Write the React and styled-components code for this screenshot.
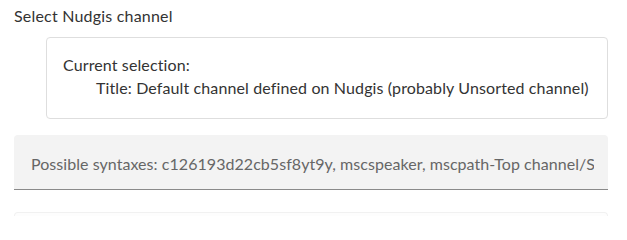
import React from "react";
import styled, { createGlobalStyle } from "styled-components";

const Global = createGlobalStyle`
  html, body { margin: 0; padding: 0; background: #fff; }
  body { font-family: "Lato", "Noto Sans", sans-serif; }
`;

const Page = styled.div`
  width: 627px;
  height: 216px;
  overflow: hidden;
  box-sizing: border-box;
  padding: 0 19px 0 14px;
  display: flex;
  flex-direction: column;
  & > * { flex-shrink: 0; }
`;

const Heading = styled.div`
  font-size: 16px;
  line-height: 20px;
  color: #333;
  padding-top: 6px;
  letter-spacing: 0.2px;
`;

const Card = styled.div`
  margin: 11px 0 0 32px;
  border: 1px solid #dedede;
  border-radius: 4px;
  padding: 15px 16px 19px;
  display: flex;
  flex-direction: column;
`;

const Line = styled.div`
  font-size: 16px;
  line-height: 23px;
  color: #333;
  padding-left: ${(p) => p.$indent || 0}px;
  white-space: nowrap;
  letter-spacing: 0.12px;
`;

const Field = styled.div`
  margin-top: 16px;
  height: 54px;
  background: #f3f3f3;
  border-radius: 4px 4px 0 0;
  border-bottom: 1px solid #8a8a8a;
  display: flex;
  align-items: center;
  padding: 0 14px 0 17px;
`;

const HintClip = styled.div`
  flex: 1;
  min-width: 0;
  overflow: hidden;
  padding-top: 2px;
`;

const Hint = styled.div`
  font-size: 16px;
  color: #666;
  white-space: nowrap;
  letter-spacing: 0.05px;
`;

const NextBox = styled.div`
  margin-top: 22px;
  height: 20px;
  background: #fdfdfd;
  border: 1px solid #f1f1f1;
  border-bottom: none;
  border-radius: 4px 4px 0 0;
`;

export default function App() {
  return (
    <>
      <Global />
      <Page>
        <Heading>Select Nudgis channel</Heading>
        <Card>
          <Line>Current selection:</Line>
          <Line $indent={33}>
            Title: Default channel defined on Nudgis (probably Unsorted channel)
          </Line>
        </Card>
        <Field>
          <HintClip>
            <Hint>
              Possible syntaxes: c126193d22cb5sf8yt9y, mscspeaker, mscpath-Top channel/Sub channel
            </Hint>
          </HintClip>
        </Field>
        <NextBox />
      </Page>
    </>
  );
}
